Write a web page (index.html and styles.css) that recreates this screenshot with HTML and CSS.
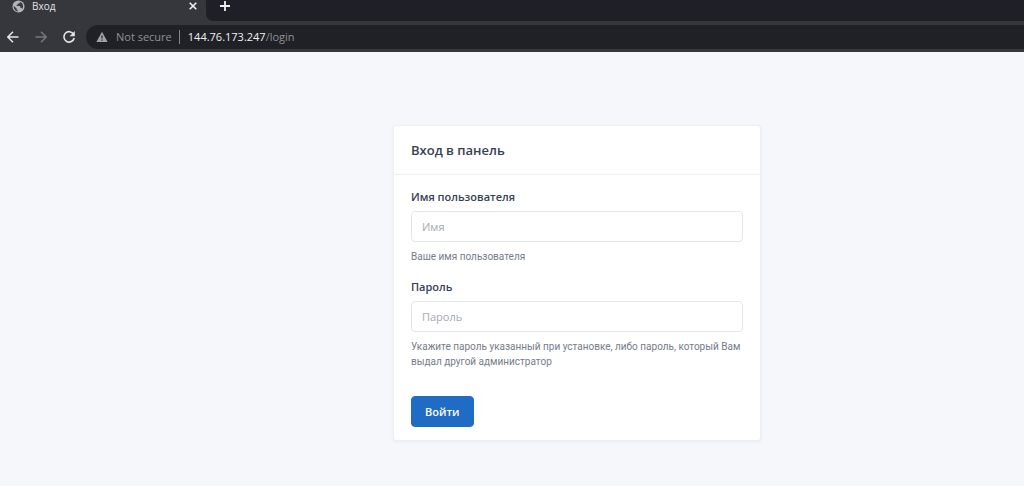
FILE: index.html
```html
<!DOCTYPE html>
<html lang="ru">
<head>
<meta charset="utf-8">
<title>Вход</title>
<link rel="stylesheet" href="styles.css">
</head>
<body>
<header class="browser">
  <div class="tabs">
    <div class="tab">
      <svg class="globe" viewBox="0 0 14 14" aria-hidden="true"><circle cx="7" cy="7" r="6.5" fill="#b4b5b9"/><path d="M1.8 6.2 5 9.2v1l1.2 1v1.2C3.600 12 1.800 9.800 1.800 7zM8.600 2v.8l-1 1H6.300v1.300H5v1.300h3.800v2h1.300l1 1.200C12.600 7.200 12.200 3.600 8.600 2z" fill="#3a3b40"/></svg>
      <span class="tab-title">Вход</span>
      <button class="icon-btn close" aria-label="Закрыть вкладку"><svg width="10" height="10" viewBox="0 0 10 10"><path d="M1.7 1.700l6.600 6.600M8.300 1.700 1.700 8.300" stroke="#f1f1f3" stroke-width="1.6"/></svg></button>
    </div>
    <div class="tab-rest">
      <button class="icon-btn" aria-label="Новая вкладка"><svg width="12" height="12" viewBox="0 0 12 12"><path d="M6 1v10M1 6h10" stroke="#f1f1f3" stroke-width="1.8"/></svg></button>
    </div>
  </div>
  <div class="toolbar">
    <nav class="nav">
      <button class="icon-btn" aria-label="Назад"><svg width="14" height="14" viewBox="0 0 14 14" fill="none" stroke="#e6e6e8" stroke-width="1.5"><path d="M12.500 7H2M7 1.800 1.800 7 7 12.200"/></svg></button>
      <button class="icon-btn" aria-label="Вперёд"><svg width="14" height="14" viewBox="0 0 14 14" fill="none" stroke="#77787c" stroke-width="1.5"><path d="M1.500 7H12M7 1.800 12.200 7 7 12.200"/></svg></button>
      <button class="icon-btn" aria-label="Обновить"><svg width="14" height="14" viewBox="0 0 14 14"><path d="M11.600 4.200A5.200 5.200 0 1 0 12.200 8" fill="none" stroke="#e6e6e8" stroke-width="1.6"/><path d="M12.800 1v5.200H7.600z" fill="#e6e6e8"/></svg></button>
    </nav>
    <div class="address">
      <svg width="12" height="12" viewBox="0 0 12 12" aria-hidden="true"><path d="M6 .8 11.600 11H.4z" fill="#a2a3a7"/><path d="M6 4.500v3M6 8.400v1.300" stroke="#202126" stroke-width="1.2"/></svg>
      <span class="secure">Not secure</span>
      <span class="divider"></span>
      <span class="url"><span class="host">144.76.173.247</span>/login</span>
    </div>
  </div>
</header>
<main class="page">
  <form class="card">
    <h1 class="card-header">Вход в панель</h1>
    <div class="card-body">
      <div class="field">
        <label class="label" for="name">Имя пользователя</label>
        <input class="input" id="name" type="text" placeholder="Имя">
        <p class="hint">Ваше имя пользователя</p>
      </div>
      <div class="field">
        <label class="label" for="password">Пароль</label>
        <input class="input" id="password" type="password" placeholder="Пароль">
        <p class="hint">Укажите пароль указанный при установке, либо пароль, который Вам выдал другой администратор</p>
      </div>
      <button class="submit" type="button">Войти</button>
    </div>
  </form>
</main>
</body>
</html>
```
FILE: styles.css
```css
* { box-sizing: border-box; }

body {
  margin: 0;
  min-height: 100vh;
  background: #f5f7fb;
  color: #354052;
  font-family: "Open Sans", "Noto Sans", sans-serif;
  font-size: 11px;
}

.browser { background: #36373c; }

.tabs { display: flex; height: 21px; }

.tab {
  display: flex;
  align-items: center;
  width: 206px;
  height: 12px;
  padding: 0 8px 0 12px;
  color: #e4e5e8;
  font-size: 10px;
}

.globe { width: 13px; height: 13px; }
.tab-title { margin-left: 7px; }
.close { margin-left: auto; }

.icon-btn {
  display: grid;
  padding: 0;
  border: 0;
  background: none;
}

.tab-rest {
  flex: 1;
  padding: 0 13px;
  background: #1f2027;
  border-bottom-left-radius: 7px;
}

.toolbar {
  display: flex;
  align-items: center;
  height: 31px;
  padding-left: 6px;
}

.nav { display: flex; gap: 14px; }

.address {
  display: flex;
  align-items: center;
  flex: 1;
  height: 24px;
  margin-left: 10px;
  padding-left: 10px;
  background: #202126;
  border-radius: 12px 0 0 12px;
  color: #8f9095;
}

.secure { margin-left: 8px; }

.divider {
  width: 1px;
  height: 14px;
  margin: 0 8px 0 7px;
  background: #85868a;
}

.host { color: #f1f1f3; }

.page { padding: 73px 0 46px 130px; }

.card {
  max-width: 368px;
  margin: 0 auto;
  background: #fff;
  border: 1px solid #eceff3;
  border-radius: 3px;
  box-shadow: 0 1px 3px rgba(35, 46, 60, 0.06);
}

.card-header {
  margin: 0;
  padding: 14px 17px;
  border-bottom: 1px solid #edf0f3;
  font-size: 13px;
  font-weight: 600;
  line-height: 20px;
}

.card-body { padding: 13px 17px; }

.field { margin-bottom: 14px; }

.label {
  display: block;
  margin-bottom: 5px;
  font-weight: 600;
  line-height: 18px;
}

.input {
  display: block;
  width: 100%;
  height: 31px;
  padding: 0 10px;
  background: #fff;
  border: 1px solid #e3e6ea;
  border-radius: 4px;
  color: inherit;
  font: inherit;
}

.input::placeholder { color: #a5a9b1; opacity: 1; }

.hint {
  margin: 7px 0 0;
  color: #767c88;
  font-family: Roboto, "Open Sans", sans-serif;
  font-size: 10px;
  line-height: 15px;
}

.submit {
  height: 31px;
  margin-top: 13px;
  padding: 0 13px;
  background: #206bc4;
  border: 1px solid #206bc4;
  border-radius: 4px;
  color: #fff;
  font: inherit;
  font-weight: 600;
}
```
